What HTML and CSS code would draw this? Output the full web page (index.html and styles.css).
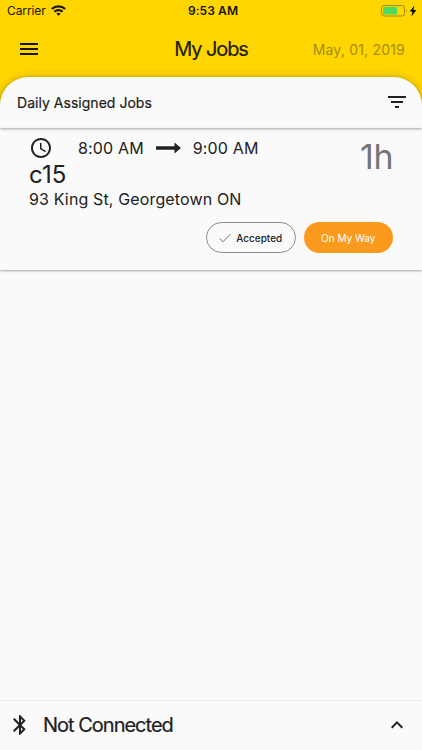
FILE: index.html
```
<!DOCTYPE html>
<html lang="en">
<head>
  <meta charset="UTF-8">
  <meta name="viewport" content="width=device-width, initial-scale=1.0">
  <title>My Jobs</title>
  <link rel="stylesheet" href="styles.css">
</head>
<body>
  <div class="app">
    <!-- Status bar -->
    <div class="status-bar">
      <div class="carrier">
        <span>Carrier</span>
        <svg width="15" height="11" viewBox="0 0 15 11" fill="none" stroke="#17150a" stroke-width="2.1">
          <path d="M.8 4.1C4.6.4 10.4.4 14.2 4.1"/>
          <path d="M3.4 6.8c2.3-2.2 5.9-2.2 8.2 0"/>
          <path d="M7.5 10.8 5.3 8.6q2.2-1.7 4.4 0z" fill="#17150a" stroke="none"/>
        </svg>
      </div>
      <span class="time">9:53 AM</span>
      <div class="battery">
        <svg width="36" height="12" viewBox="0 0 36 12">
          <rect x=".5" y=".5" width="23" height="10.5" rx="2.4" fill="none" stroke="#a28e10"/>
          <rect x="2" y="2" width="14" height="7.5" rx="1" fill="#4cd964"/>
          <path d="M25 4q1.8 1.7 0 3.6z" fill="#a28e10"/>
          <path d="M33.4.4 28.8 6.5h2.8l-1.3 5 5.1-6.6h-3z" fill="#000"/>
        </svg>
      </div>
    </div>

    <!-- Header -->
    <div class="header">
      <svg class="icon" viewBox="0 0 24 24"><path d="M3 18h18v-2H3v2zm0-5h18v-2H3v2zm0-7v2h18V6H3z"/></svg>
      <h1>My Jobs</h1>
      <span class="date">May, 01, 2019</span>
    </div>

    <!-- Job list -->
    <div class="panel">
      <div class="panel-title">
        <h2>Daily Assigned Jobs</h2>
        <svg class="icon" viewBox="0 0 24 24"><path d="M10 18h4v-2h-4v2zM3 6v2h18V6H3zm3 7h12v-2H6v2z"/></svg>
      </div>

      <div class="job">
        <div class="job-top">
          <div class="job-info">
            <div class="job-time">
              <svg class="icon" viewBox="0 0 24 24"><path d="M11.99 2C6.47 2 2 6.48 2 12s4.47 10 9.99 10C17.52 22 22 17.52 22 12S17.52 2 11.99 2zM12 20c-4.42 0-8-3.58-8-8s3.58-8 8-8 8 3.58 8 8-3.58 8-8 8zm.5-13H11v6l5.25 3.15.75-1.23-4.5-2.67z"/></svg>
              <span class="start">8:00 AM</span>
              <svg class="arrow" width="25" height="12" viewBox="0 0 25 12"><path d="M1 4.200h17.500V.5L25 6l-6.500 5.500V7.800H1A1.800 1.800 0 0 1 1 4.200z"/></svg>
              <span>9:00 AM</span>
            </div>
            <div class="job-name">c15</div>
            <div class="job-address">93 King St, Georgetown ON</div>
          </div>
          <div class="job-duration">1h</div>
        </div>
        <div class="job-actions">
          <button class="btn btn-outline">
            <svg width="12" height="10" viewBox="0 0 12 10" fill="none" stroke="#777"><path d="M.7 5.600 4 8.800 11.400 1"/></svg>
            <span>Accepted</span>
          </button>
          <button class="btn btn-orange">On My Way</button>
        </div>
      </div>
    </div>

    <!-- Bluetooth status -->
    <div class="footer">
      <svg class="icon" viewBox="0 0 24 24"><path d="M17.71 7.71L12 2h-1v7.59L6.41 5 5 6.41 10.59 12 5 17.59 6.41 19 11 14.41V22h1l5.71-5.71-4.3-4.29 4.3-4.29zM13 5.83l1.88 1.88L13 9.59V5.83zm1.88 10.46L13 18.17v-3.76l1.88 1.88z"/></svg>
      <span class="footer-text">Not Connected</span>
      <svg class="icon" viewBox="0 0 24 24"><path d="M12 8l-6 6 1.41 1.41L12 10.83l4.59 4.58L18 14z"/></svg>
    </div>
  </div>
</body>
</html>
```
FILE: styles.css
```
* {
    box-sizing: border-box;
}

body {
    font-family: Inter, Roboto, sans-serif;
    margin: 0;
    background-color: #ffd600;
    color: #212121;
}

.app {
    display: flex;
    flex-direction: column;
    height: 750px;
    overflow: hidden;
}

.icon {
    width: 24px;
    height: 24px;
    flex: none;
    fill: #212121;
}

.status-bar {
    display: grid;
    grid-template-columns: 1fr auto 1fr;
    align-items: center;
    height: 21px;
    padding: 0 5px 0 7px;
    font-size: 12px;
    color: #17150a;
}

.carrier {
    display: flex;
    align-items: center;
    gap: 5px;
    letter-spacing: -0.1px;
}

.time {
    font-weight: 600;
    letter-spacing: 0.1px;
    margin-left: 2px;
}

.battery {
    display: flex;
    justify-content: flex-end;
}

.header {
    display: grid;
    grid-template-columns: 1fr auto 1fr;
    align-items: center;
    height: 56px;
    padding: 0 17px;
}

.header .icon {
    fill: #17150a;
}

.header h1 {
    margin: 0;
    font-size: 20px;
    font-weight: 400;
    letter-spacing: -1.1px;
    color: #1e1b0c;
    -webkit-text-stroke: 0.2px #1e1b0c;
}

.date {
    font-size: 14px;
    letter-spacing: 0.2px;
    text-align: right;
    color: #a58c0b;
}

.panel {
    flex: 1;
    background-color: #fafafa;
    border-radius: 28px 28px 0 0;
    box-shadow: 0 0 8px rgba(0, 0, 0, 0.2);
}

.panel-title {
    display: flex;
    align-items: center;
    justify-content: space-between;
    height: 51px;
    padding: 0 13px 1px 17px;
    box-shadow: 0 1px 3px rgba(0, 0, 0, 0.35);
    border-radius: 28px 28px 0 0;
}

.panel-title h2 {
    margin: 0;
    font-size: 14px;
    font-weight: 400;
    letter-spacing: 0.03px;
    -webkit-text-stroke: 0.2px #212121;
}

.job {
    height: 142px;
    padding: 8px 29px 0;
    box-shadow: 0 1px 2px rgba(0, 0, 0, 0.35);
}

.job-top {
    display: flex;
    justify-content: space-between;
    height: 86px;
}

.job-time {
    display: flex;
    align-items: center;
    height: 24px;
    font-size: 16px;
    letter-spacing: 0.15px;
}

.start {
    margin-left: 25px;
}

.arrow {
    margin: 0 12px;
    fill: #212121;
}

.job-name {
    font-size: 24px;
    line-height: 30px;
}

.job-address {
    font-size: 16px;
    line-height: 19px;
    letter-spacing: 0.14px;
}

.job-duration {
    font-size: 34px;
    font-weight: 400;
    line-height: 41px;
    letter-spacing: -0.5px;
    color: #757575;
}

.job-actions {
    display: flex;
    justify-content: flex-end;
    gap: 8px;
}

.btn {
    display: flex;
    align-items: center;
    justify-content: center;
    width: 89.5px;
    height: 31px;
    padding: 0;
    border: none;
    border-radius: 16px;
    font-family: inherit;
    font-size: 10px;
    cursor: pointer;
}

.btn-outline {
    gap: 5px;
    border: 1px solid #8c8c8c;
    background-color: #fafafa;
    color: #212121;
    font-weight: 500;
}

.btn-orange {
    background-color: #fc9a1d;
    color: white;
}

.footer {
    display: flex;
    align-items: center;
    height: 50px;
    padding: 0 13px 1px 8px;
    border-top: 1px solid #efefef;
    background-color: #fafafa;
}

.footer-text {
    flex: 1;
    margin-left: 11px;
    font-size: 20px;
    font-weight: 400;
    letter-spacing: -1px;
    -webkit-text-stroke: 0.2px #212121;
}
```
